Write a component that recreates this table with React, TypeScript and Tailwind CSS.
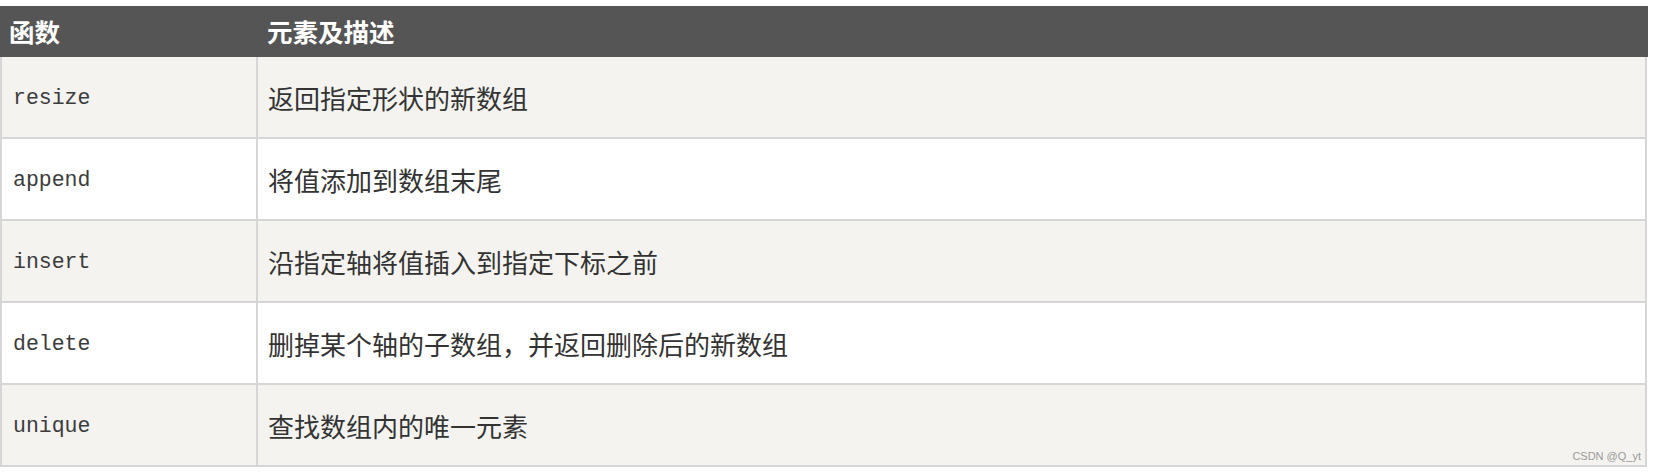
import React from "react";

const rows = [
  { fn: "resize", desc: "返回指定形状的新数组" },
  { fn: "append", desc: "将值添加到数组末尾" },
  { fn: "insert", desc: "沿指定轴将值插入到指定下标之前" },
  { fn: "delete", desc: "删掉某个轴的子数组，并返回删除后的新数组" },
  { fn: "unique", desc: "查找数组内的唯一元素" },
];

export default function App() {
  return (
    <div className="relative w-[1657px] h-[473px] bg-white pt-[6px]">
      <div className="w-[1648px]">
        <div
          className="flex h-[51px] items-center bg-[#555555] text-white font-bold text-[25.5px]"
          style={{ fontFamily: '"Noto Sans CJK SC", sans-serif' }}
        >
          <div className="w-[258px] pl-[9px]">函数</div>
          <div className="flex-1 pl-[9px]">元素及描述</div>
        </div>
        {rows.map((r, i) => (
          <div
            key={r.fn}
            className={`flex h-[82px] border-x-2 border-b-2 border-[#d6d6d6] w-[1647px] ${
              i % 2 === 0 ? "bg-[#f4f3f0]" : "bg-white"
            }`}
          >
            <div
              className="w-[256px] border-r-2 border-[#d6d6d6] flex items-center pl-[11px] pt-[3px] text-[21.5px] text-[#3c3c3c]"
              style={{ fontFamily: '"Liberation Mono", monospace' }}
            >
              {r.fn}
            </div>
            <div
              className="flex-1 flex items-center pl-[10px] text-[26px] text-[#333333]"
              style={{ fontFamily: '"Noto Sans CJK SC", sans-serif' }}
            >
              {r.desc}
            </div>
          </div>
        ))}
      </div>
      <div
        className="absolute right-[16px] bottom-[9px] text-[11px] text-[#9a9a9a]"
        style={{ fontFamily: '"Liberation Sans", sans-serif' }}
      >
        CSDN @Q_yt
      </div>
    </div>
  );
}
